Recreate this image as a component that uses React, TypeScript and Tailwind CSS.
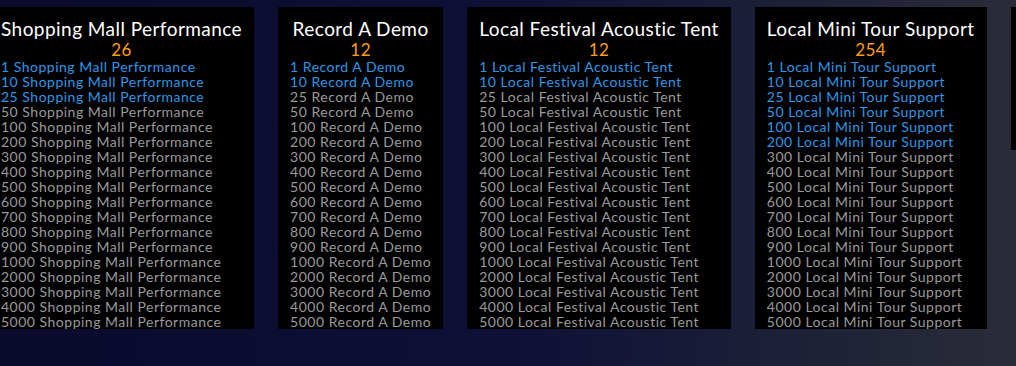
import React from 'react';

interface Reward {
  title: string;
  count: number;
  unlocked: number;
}

const STEPS = [1, 10, 25, 50, 100, 200, 300, 400, 500, 600, 700, 800, 900, 1000, 2000, 3000, 4000, 5000];

const rewards: Reward[] = [
  { title: 'Shopping Mall Performance', count: 26, unlocked: 3 },
  { title: 'Record A Demo', count: 12, unlocked: 2 },
  { title: 'Local Festival Acoustic Tent', count: 12, unlocked: 2 },
  { title: 'Local Mini Tour Support', count: 254, unlocked: 6 },
];

function RewardPanel({ reward }: { reward: Reward }) {
  return (
    <div className="shrink-0 bg-black px-[12px] pt-[10px]">
      <div className="text-center text-[19px] leading-[24px] tracking-[0.45px] text-white whitespace-nowrap">
        {reward.title}
      </div>
      <div className="text-center text-[17px] leading-[18px] tracking-[0.5px] text-[#ff9f0a]">{reward.count}</div>
      <ul>
        {STEPS.map((step, index) => (
          <li
            key={step}
            className={
              index < reward.unlocked
                ? 'text-[14px] leading-[15px] tracking-[0.5px] whitespace-nowrap text-[#2e97e6]'
                : 'text-[14px] leading-[15px] tracking-[0.5px] whitespace-nowrap text-[#9a9a9a]'
            }
          >
            {step} {reward.title}
          </li>
        ))}
      </ul>
    </div>
  );
}

export default function App() {
  return (
    <div
      className="h-[366px] w-[1016px] overflow-hidden bg-gradient-to-r from-[#090a2c] via-[#0e1036] to-[#2a2c38] pt-[7px]"
      style={{ fontFamily: 'Lato, "Noto Sans", sans-serif' }}
    >
      <div className="-ml-[11px] flex items-start gap-[24px]">
        {rewards.map((reward) => (
          <RewardPanel key={reward.title} reward={reward} />
        ))}
        {/* next panel, scrolled out of view */}
        <div className="h-[143px] w-[200px] shrink-0 bg-black" />
      </div>
    </div>
  );
}
